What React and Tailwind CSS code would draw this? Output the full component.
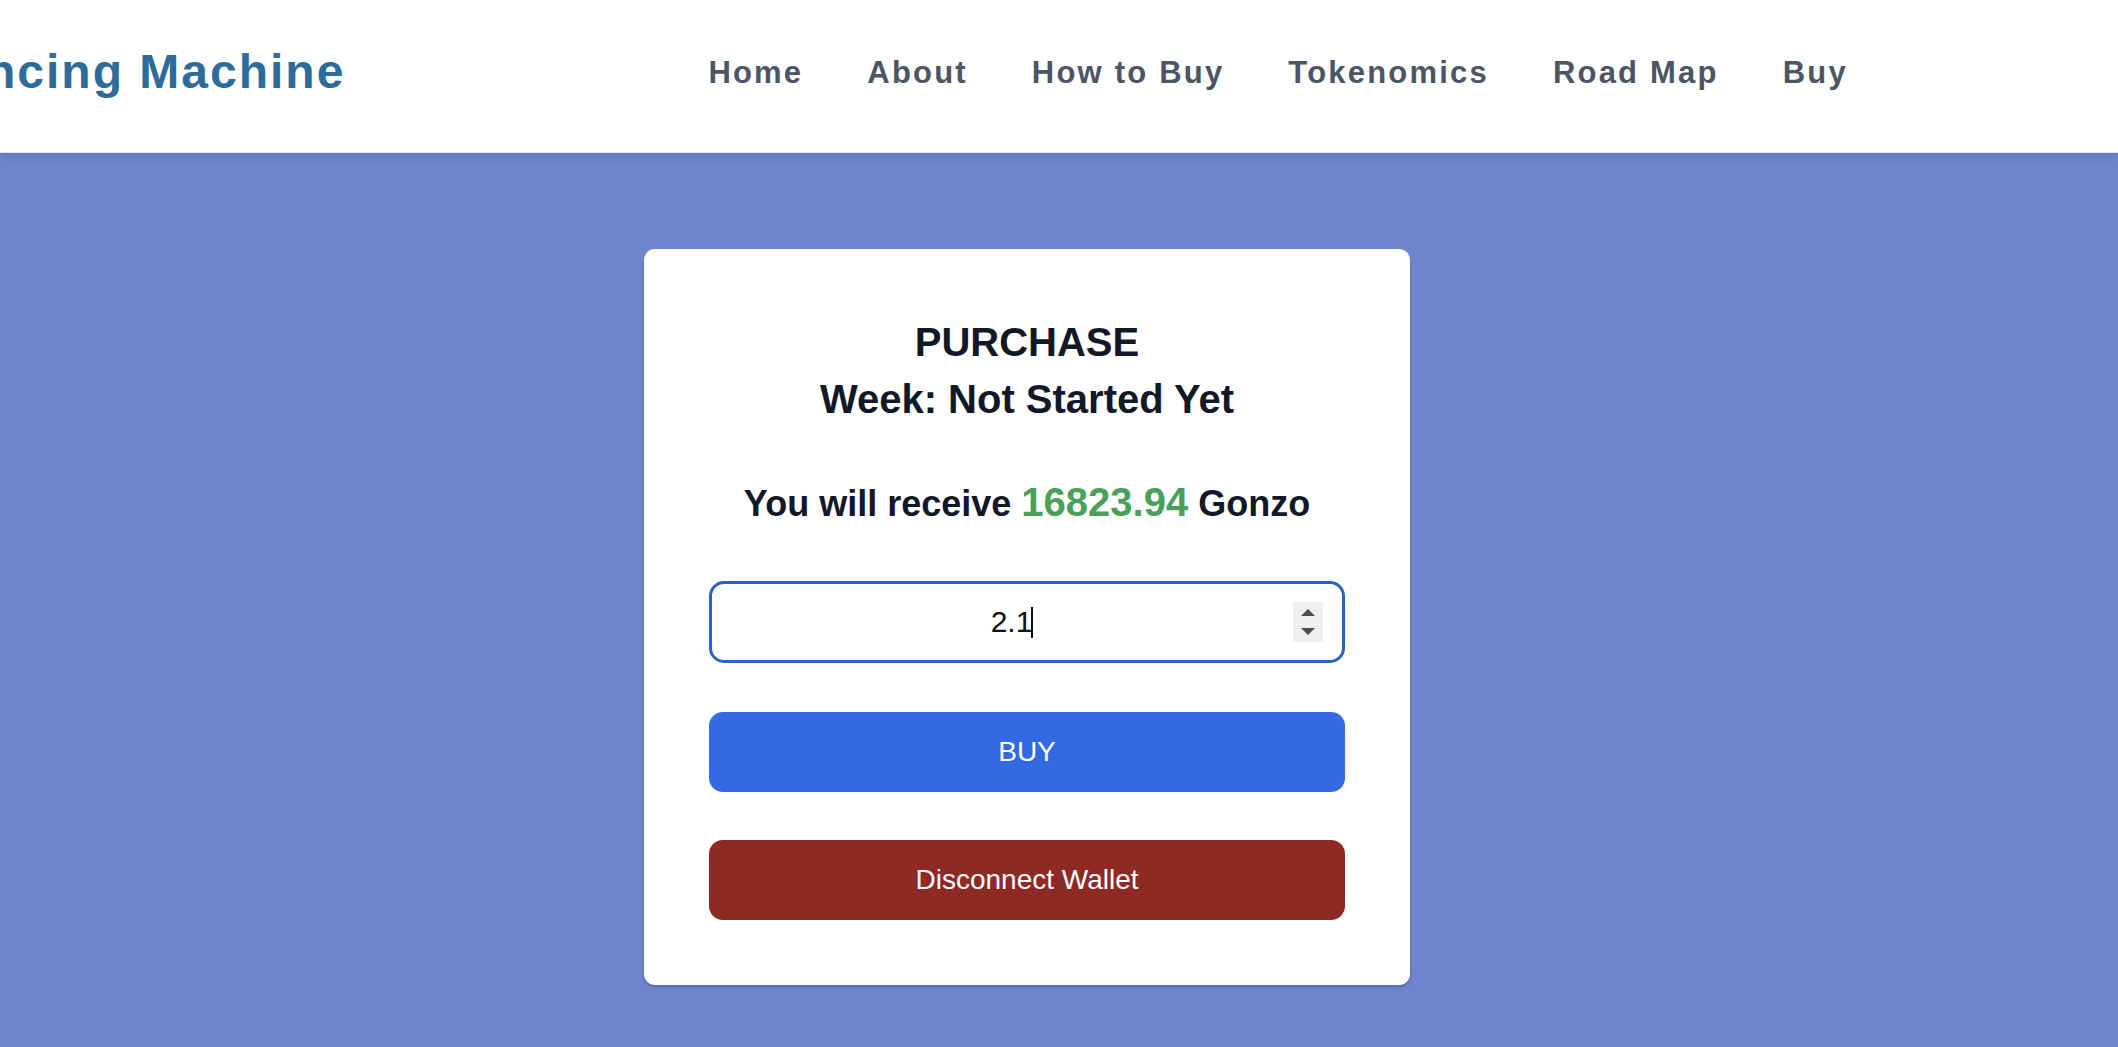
import React from "react";

const links = ["Home", "About", "How to Buy", "Tokenomics", "Road Map", "Buy"];

function Spinner() {
  // the number input's arrows
  return (
    <div className="w-[30px] h-[40px] bg-[#efefef] shrink-0">
      <svg width="30" height="40" viewBox="0 0 30 40">
        <polygon points="15,7 22,14 8,14" fill="#4d4d4d" />
        <polygon points="8,26 22,26 15,33" fill="#4d4d4d" />
      </svg>
    </div>
  );
}

export default function App() {
  return (
    <div className="min-h-screen w-full overflow-hidden bg-[#6e85ce] font-['Liberation_Sans',Arial,sans-serif]">
      <header className="relative z-10 h-[153px] bg-white border-b border-[#e5e5e5] shadow-[0_3px_10px_rgba(0,0,0,0.12)] flex items-center pb-[8px]">
        <span className="-ml-[14px] shrink-0 whitespace-nowrap text-[48px] leading-none font-bold tracking-[2px] text-[#2d6b9b]">
          ncing Machine
        </span>
        <nav className="ml-[363px] mt-[2px] flex gap-[64px]">
          {links.map((l) => (
            <a
              key={l}
              href="#"
              className="whitespace-nowrap text-[31px] leading-[36px] font-bold tracking-[2.2px] text-[#4b5563]"
            >
              {l}
            </a>
          ))}
        </nav>
      </header>

      <main className="flex justify-center pr-[64px] pt-[96px] pb-[63px]">
        <div className="w-[766px] bg-white rounded-[11px] shadow-[0_2px_3px_rgba(0,0,0,0.22)] p-[65px] flex flex-col text-[#111827]">
          <h2 className="text-center text-[40px] leading-[57px] font-bold">
            PURCHASE
            <br />
            Week: Not Started Yet
          </h2>
          <p className="mt-[50px] text-center text-[36px] leading-[48px] font-bold">
            You will receive{" "}
            <span className="text-[40px] text-[#4a9f59]">16823.94</span> Gonzo
          </p>

          <div className="mt-[53px] h-[82px] rounded-[15px] border-[3px] border-[#2563c6] flex items-center pl-[18px] pr-[19px]">
            <div className="flex-1 flex justify-center">
              <span className="relative inline-block text-[30px] leading-[36px] text-[#111111]">
                2.1
                <span className="absolute right-[-1px] top-[3px] h-[31px] w-[2px] bg-[#111111]" />
              </span>
            </div>
            <Spinner />
          </div>

          <button className="mt-[49px] h-[80px] rounded-[14px] bg-[#3369e3] text-white text-[28px]">
            BUY
          </button>
          <button className="mt-[48px] h-[80px] rounded-[14px] bg-[#8f2924] text-white text-[28px]">
            Disconnect Wallet
          </button>
        </div>
      </main>
    </div>
  );
}
